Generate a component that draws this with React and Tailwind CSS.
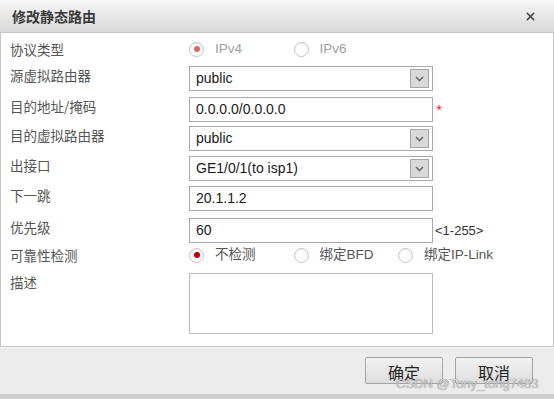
import { X } from "lucide-react";

const cjk = "font-['Noto_Sans_CJK_SC','Noto_Sans',sans-serif]";
const latin = "font-['Liberation_Sans','Noto_Sans_CJK_SC',sans-serif]";

function Radio({ checked, disabled }) {
  return (
    <span className="flex h-[15px] w-[15px] shrink-0 items-center justify-center rounded-full border border-[#c4c4c4] bg-white shadow-[inset_0_1px_2px_rgba(0,0,0,0.08)]">
      {checked && (
        <span
          className={
            "h-[6px] w-[6px] rounded-full " +
            (disabled ? "bg-[#d46a6a]" : "bg-[#c00000]")
          }
        />
      )}
    </span>
  );
}

function RadioItem({ label, checked, disabled }) {
  return (
    <div className="flex w-[104.5px] items-center gap-[11px]">
      <Radio checked={checked} disabled={disabled} />
      <span
        className={
          latin + " text-[13.5px] " + (disabled ? "text-[#a0a0a0]" : "text-[#555]")
        }
      >
        {label}
      </span>
    </div>
  );
}

function Label({ children, center }) {
  return (
    <div
      className={
        cjk +
        " w-[188px] shrink-0 pl-[9px] text-[13.5px] leading-[19px] text-[#555] " +
        (center ? "self-center" : "")
      }
    >
      {children}
    </div>
  );
}

function Box({ value, select }) {
  return (
    <div className="flex h-[25px] w-[244px] items-center border border-[#a9a9a9] bg-white pr-[3px] pl-[6px]">
      <span className={latin + " flex-1 text-[14px] text-[#1a1a1a]"}>{value}</span>
      {select && (
        <span className="flex h-[19px] w-[19px] items-center justify-center border border-[#a6a6a6] bg-[#d9d9d9]">
          <svg width="9" height="6" viewBox="0 0 9 6">
            <path d="M1 1l3.5 3.5L8 1" fill="none" stroke="#6a6a6a" strokeWidth="1.6" />
          </svg>
        </span>
      )}
    </div>
  );
}

function Button({ children }) {
  return (
    <button
      className={
        cjk +
        " h-[27px] w-[78px] rounded-[2px] border border-[#a3a3a3] bg-gradient-to-b from-[#f2f2f2] to-[#dedede] pt-[2px] text-[16px] leading-none text-[#222]"
      }
    >
      {children}
    </button>
  );
}

export default function App() {
  return (
    <div className="relative flex h-[399px] w-[554px] flex-col overflow-hidden bg-white">
      <div className="flex h-[33px] shrink-0 items-center justify-between border-b border-[#c6c6c6] bg-gradient-to-b from-[#f7f7f7] to-[#d8d8d8] pr-[17px] pl-[12px]">
        <span className={cjk + " text-[14px] font-bold text-[#3a3a3a]"}>修改静态路由</span>
        <X size={13} strokeWidth={3} className="text-[#444]" />
      </div>

      <div className="flex h-[314px] shrink-0 flex-col border-x border-b border-[#c4c4c4] bg-white">
        <div className="mt-[4px] flex h-[24px]">
          <Label center>协议类型</Label>
          <div className="flex items-center">
            <RadioItem label="IPv4" checked disabled />
            <RadioItem label="IPv6" disabled />
          </div>
        </div>

        <div className="mt-[5px] flex">
          <Label>源虚拟路由器</Label>
          <Box value="public" select />
        </div>

        <div className="mt-[6px] flex">
          <Label>目的地址/掩码</Label>
          <Box value="0.0.0.0/0.0.0.0" />
          <span className="ml-[3px] mt-[6px] text-[11px] leading-none text-[#e02020]">*</span>
        </div>

        <div className="mt-[4px] flex">
          <Label>目的虚拟路由器</Label>
          <Box value="public" select />
        </div>

        <div className="mt-[5px] flex">
          <Label>出接口</Label>
          <Box value="GE1/0/1(to isp1)" select />
        </div>

        <div className="mt-[5px] flex">
          <Label>下一跳</Label>
          <Box value="20.1.1.2" />
        </div>

        <div className="mt-[7px] flex">
          <Label>优先级</Label>
          <Box value="60" />
          <span className={latin + " ml-[2px] self-center text-[13px] text-[#333]"}>&lt;1-255&gt;</span>
        </div>

        <div className="mt-[2px] flex h-[20px]">
          <Label center>可靠性检测</Label>
          <div className="flex items-center">
            <RadioItem label="不检测" checked />
            <RadioItem label="绑定BFD" />
            <RadioItem label="绑定IP-Link" />
          </div>
        </div>

        <div className="mt-[8px] flex">
          <Label>描述</Label>
          <div className="h-[61px] w-[244px] border border-[#bcbcbc] bg-white" />
        </div>
      </div>

      <div className="flex flex-1 items-start justify-end gap-[12px] border-t border-[#f8f8f8] bg-[#ececec] pt-[9px] pr-[21px]">
        <Button>确定</Button>
        <Button>取消</Button>
      </div>
      <div className="h-[5px] shrink-0 bg-[#cfcfcf]" />

      <span
        className={
          latin +
          " absolute top-[377px] left-[396px] text-[13px] leading-none text-[#d0d0d0] [text-shadow:0_0_1px_#707070]"
        }
      >
        CSDN @Tony_tong7483
      </span>
    </div>
  );
}
